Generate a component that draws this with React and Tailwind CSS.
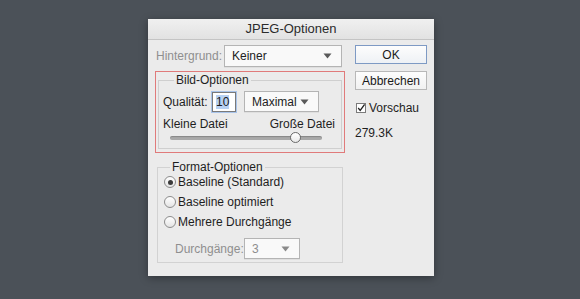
import React from "react";

const font = { fontFamily: '"Liberation Sans", Arial, sans-serif' };

function Caret({ muted }) {
  return (
    <svg width="9" height="6" viewBox="0 0 9 6" className="shrink-0">
      <path d="M0.5 0.5 L8.5 0.5 L4.5 5.5 Z" fill={muted ? "#8a8a8a" : "#5a5a5a"} />
    </svg>
  );
}

function Select({ value, className = "", muted }) {
  return (
    <div
      className={`flex h-[21px] items-center justify-between border border-[#b4b4b4] bg-[#f9f9f9] pl-[7px] pr-[9px] text-[12px] shadow-[0_1px_0_rgba(0,0,0,0.05)] ${
        muted ? "text-[#8e8e8e]" : "text-[#222]"
      } ${className}`}
    >
      <span>{value}</span>
      <Caret muted={muted} />
    </div>
  );
}

function Radio({ checked, label }) {
  return (
    <div className="flex h-[20px] items-center">
      <span className="ml-[6px] mr-[2px] flex h-[12px] w-[12px] items-center justify-center rounded-full border border-[#8c8c8c] bg-gradient-to-b from-white to-[#e4e4e4]">
        {checked && <span className="h-[5px] w-[5px] rounded-full bg-[#3a3a3a]" />}
      </span>
      <span className="text-[12px] text-[#1e1e1e]">{label}</span>
    </div>
  );
}

function Button({ children, primary }) {
  return (
    <div
      className={`flex h-[19px] w-[72px] items-center justify-center border text-[12px] text-[#1a1a1a] ${
        primary
          ? "border-[#7e9ac4] bg-gradient-to-b from-[#fdfdfd] to-[#eef1f5]"
          : "border-[#b8b8b8] bg-gradient-to-b from-[#fdfdfd] to-[#f1f1f1]"
      }`}
    >
      {children}
    </div>
  );
}

export default function App() {
  return (
    <div className="h-[299px] w-[580px] overflow-hidden bg-[#4b5158] pl-[148px] pt-[19px]" style={font}>
      <div className="h-[257px] w-[286px] bg-[#ebebeb] shadow-[0_2px_8px_rgba(0,0,0,0.35)]">
        <div className="flex h-[21px] items-center justify-center border-b border-[#c4c4c4] bg-gradient-to-b from-[#f0f0f0] to-[#e2e2e2] text-[13px] text-[#2b2b2b]">
          JPEG-Optionen
        </div>
        <div className="flex pl-[7px]">
          <div className="w-[190px]">
            <div className="mt-[5px] flex h-[22px] items-center">
              <span className="w-[69px] pl-[1px] text-[12px] text-[#8f8f8f]">Hintergrund:</span>
              <Select value="Keiner" className="h-[22px] w-[118px]" />
            </div>

            <div className="mt-[4px] h-[82px] border border-[#e07a7a] px-[2px] pt-[1px]">
              <fieldset className="h-[76px] border border-[#cfcfcf] px-[4px]">
                <legend className="ml-[11px] px-[2px] text-[12px] leading-[14px] text-[#1e1e1e]">Bild-Optionen</legend>
                <div className="mt-[4px] flex items-center">
                  <span className="w-[49px] text-[12px] text-[#1e1e1e]">Qualität:</span>
                  <div className="flex h-[20px] w-[24px] items-center border border-[#7a7a7a] bg-white pl-[3px] text-[12px] text-[#1a1a1a] shadow-[0_0_0_1px_#a9c4ea]">
                    <span className="bg-[#b7d1f3] leading-[14px]">10</span>
                  </div>
                  <Select value="Maximal" className="ml-[8px] h-[20px] w-[75px]" />
                </div>
                <div className="mt-[5px] flex justify-between pr-[2px] text-[12px] leading-[14px] text-[#1e1e1e]">
                  <span>Kleine Datei</span>
                  <span>Große Datei</span>
                </div>
                <div className="relative ml-[7px] mt-[5px] h-[4px] w-[152px] rounded-full bg-[#a9a9a9] shadow-[inset_0_1px_1px_rgba(0,0,0,0.2)]">
                  <span className="absolute left-[120px] top-[-4px] h-[11px] w-[11px] rounded-full border border-[#6a6a6a] bg-gradient-to-b from-white to-[#e9e9e9]" />
                </div>
              </fieldset>
            </div>

            <fieldset className="ml-[2px] mt-[7px] h-[103px] w-[186px] border border-[#d2d2d2]">
              <legend className="ml-[12px] px-[2px] text-[12px] leading-[14px] text-[#1e1e1e]">Format-Optionen</legend>
              <div className="-mt-[2px]">
                <Radio checked label="Baseline (Standard)" />
                <Radio label="Baseline optimiert" />
                <Radio label="Mehrere Durchgänge" />
              </div>
              <div className="mt-[6px] flex items-center">
                <span className="w-[86px] pl-[17px] text-[12px] text-[#8f8f8f]">Durchgänge:</span>
                <Select value="3" muted className="h-[20px] w-[56px]" />
              </div>
            </fieldset>
          </div>

          <div className="ml-[10px] mt-[5px] flex w-[72px] flex-col">
            <Button primary>OK</Button>
            <div className="mt-[7px]">
              <Button>Abbrechen</Button>
            </div>
            <div className="mt-[9px] flex items-center">
              <span className="ml-[1px] mr-[3px] flex h-[10px] w-[10px] items-center justify-center border border-[#7b7b7b] bg-white">
                <svg width="10" height="10" viewBox="0 0 10 10">
                  <path d="M1.5 5 L4 8 L9.5 0.5" fill="none" stroke="#222" strokeWidth="1.6" />
                </svg>
              </span>
              <span className="text-[12px] text-[#1e1e1e]">Vorschau</span>
            </div>
            <div className="mt-[7px] text-[12px] text-[#1e1e1e]">279.3K</div>
          </div>
        </div>
      </div>
    </div>
  );
}
